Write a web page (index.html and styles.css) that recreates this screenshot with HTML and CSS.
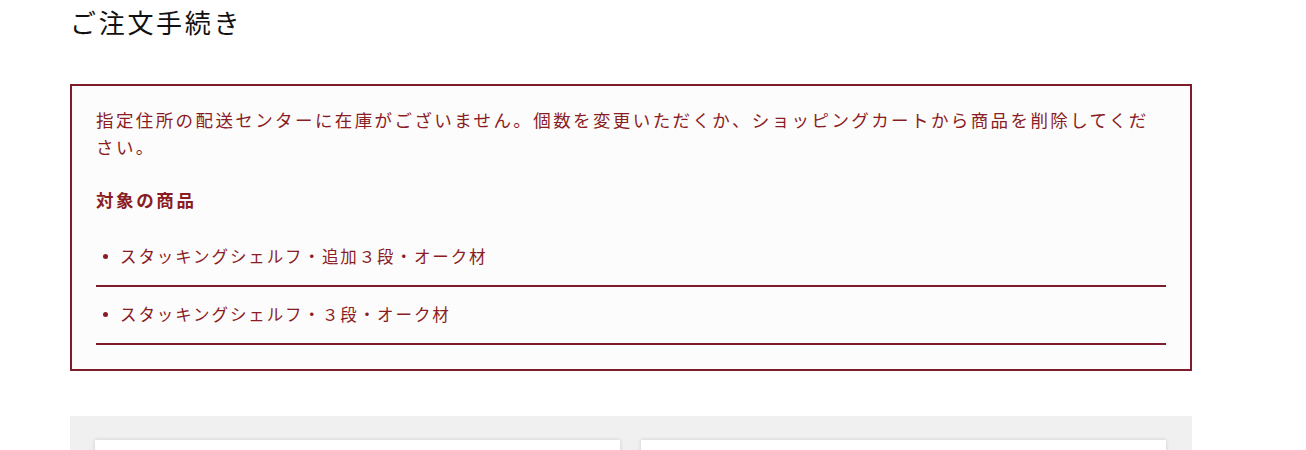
FILE: index.html
```html
<!DOCTYPE html>
<html lang="ja">
<head>
<meta charset="utf-8">
<title>ご注文手続き</title>
<link rel="stylesheet" href="styles.css">
</head>
<body>
<main class="page">
  <h1 class="title">ご注文手続き</h1>
  <section class="alert">
    <p class="alert-msg">指定住所の配送センターに在庫がございません。個数を変更いただくか、ショッピングカートから商品を削除してください。</p>
    <h2 class="alert-head">対象の商品</h2>
    <ul class="alert-list">
      <li class="alert-item">スタッキングシェルフ・追加３段・オーク材</li>
      <li class="alert-item">スタッキングシェルフ・３段・オーク材</li>
    </ul>
  </section>
  <section class="panel">
    <div class="card"></div>
    <div class="card"></div>
  </section>
</main>
</body>
</html>
```

FILE: styles.css
```css
html, body {
  margin: 0;
  padding: 0;
  background: #ffffff;
}
body {
  font-family: "Noto Sans CJK JP", "Noto Sans", sans-serif;
  color: #222;
}
.page {
  width: 1122px;
  margin-left: 70px;
}
.title {
  margin: 4px 0 44px;
  font-size: 26px;
  line-height: 36px;
  font-weight: 400;
  letter-spacing: 2.7px;
  color: #111111;
}
.alert {
  border: 2px solid #7d1d2b;
  background: #fcfcfc;
  padding: 20px 24px 24px;
  color: #8a1c24;
}
.alert-msg {
  margin: 0;
  font-size: 17.5px;
  line-height: 27px;
  letter-spacing: 2.4px;
}
.alert-head {
  margin: 26px 0 0;
  font-size: 17.5px;
  line-height: 27px;
  font-weight: 700;
  letter-spacing: 2.6px;
}
.alert-list {
  margin: 16px 0 0;
  padding: 0;
  list-style: none;
}
.alert-item {
  position: relative;
  font-size: 16.5px;
  line-height: 26px;
  letter-spacing: 1.9px;
  padding: 14px 0 16px 24px;
  border-bottom: 2px solid #7d1d2b;
}
.alert-item::before {
  content: "";
  position: absolute;
  left: 7px;
  top: 25px;
  width: 5px;
  height: 5px;
  border-radius: 50%;
  background: #8a1c24;
}
.panel {
  margin-top: 45px;
  background: #f0f0f0;
  padding: 24px 24px 40px 25px;
  display: flex;
  gap: 21px;
}
.card {
  width: 525px;
  height: 140px;
  background: #ffffff;
  box-shadow: 0 0 4px rgba(0, 0, 0, 0.15);
}
```
